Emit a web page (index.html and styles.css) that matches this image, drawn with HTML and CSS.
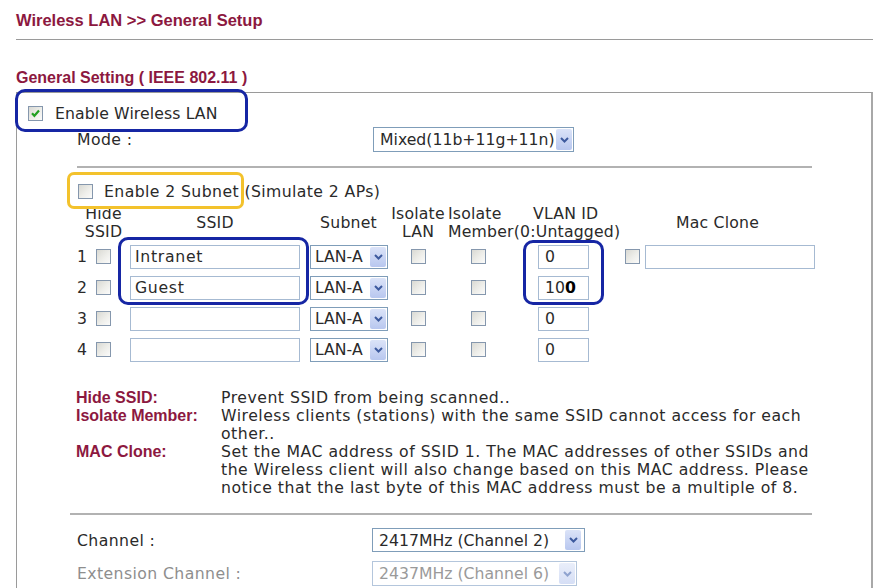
FILE: index.html
```html
<!DOCTYPE html>
<html>
<head>
<meta charset="utf-8">
<title>Wireless LAN General Setup</title>
<link rel="stylesheet" href="styles.css">
</head>
<body>
<div class="page">
  <h1 class="title">Wireless LAN &gt;&gt; General Setup</h1>
  <div class="rule"></div>
  <h2 class="section">General Setting ( IEEE 802.11 )</h2>
  <div class="box">
    <div class="enable-row">
      <span class="cb"><svg width="11" height="11" viewBox="0 0 11 11"><path d="M2 5.2 L4.4 7.8 L9 2.6" fill="none" stroke="#22a022" stroke-width="2.2"/></svg></span>
      <span>Enable Wireless LAN</span>
    </div>
    <div class="field-row mode-row">
      <span class="field-label">Mode :</span>
      <span class="select sel-mode"><span class="val">Mixed(11b+11g+11n)</span><span class="arrow"><svg width="9" height="6" viewBox="0 0 9 6"><path d="M1 1 L4.5 4.5 L8 1" fill="none" stroke="#3d5a9e" stroke-width="2"/></svg></span></span>
    </div>
    <div class="sep"></div>
    <div class="subnet-row">
      <span class="cb"></span>
      <span class="subnet-text">Enable 2 Subnet <span class="sim">(Simulate 2 APs)</span></span>
    </div>

    <div class="ssid-table">
      <div class="th th-hide">Hide<br>SSID</div>
      <div class="th th-center">SSID</div>
      <div class="th th-center th-subnet">Subnet</div>
      <div class="th th-iso">Isolate<br>LAN</div>
      <div class="th th-mem">Isolate<br>Member(0:Untagged)</div>
      <div class="th th-vlan">VLAN ID</div>
      <div class="th th-center th-mac">Mac Clone</div>

      <div class="td td-num">1</div>
      <div class="td td-hide"><span class="cb"></span></div>
      <div class="td"><span class="inp inp-ssid">Intranet</span></div>
      <div class="td td-subnet"><span class="select sel-subnet"><span class="val">LAN-A</span><span class="arrow"><svg width="9" height="6" viewBox="0 0 9 6"><path d="M1 1 L4.5 4.5 L8 1" fill="none" stroke="#3d5a9e" stroke-width="2"/></svg></span></span></div>
      <div class="td td-c"><span class="cb"></span></div>
      <div class="td td-c"><span class="cb"></span></div>
      <div class="td td-vlan"><span class="inp inp-vlan">0</span></div>
      <div class="td td-maccb"><span class="cb"></span></div>
      <div class="td"><span class="inp inp-mac"></span></div>

      <div class="td td-num">2</div>
      <div class="td td-hide"><span class="cb"></span></div>
      <div class="td"><span class="inp inp-ssid">Guest</span></div>
      <div class="td td-subnet"><span class="select sel-subnet"><span class="val">LAN-A</span><span class="arrow"><svg width="9" height="6" viewBox="0 0 9 6"><path d="M1 1 L4.5 4.5 L8 1" fill="none" stroke="#3d5a9e" stroke-width="2"/></svg></span></span></div>
      <div class="td td-c"><span class="cb"></span></div>
      <div class="td td-c"><span class="cb"></span></div>
      <div class="td td-vlan"><span class="inp inp-vlan">10<b>0</b></span></div>
      <div class="td"></div>
      <div class="td"></div>

      <div class="td td-num">3</div>
      <div class="td td-hide"><span class="cb"></span></div>
      <div class="td"><span class="inp inp-ssid"></span></div>
      <div class="td td-subnet"><span class="select sel-subnet"><span class="val">LAN-A</span><span class="arrow"><svg width="9" height="6" viewBox="0 0 9 6"><path d="M1 1 L4.5 4.5 L8 1" fill="none" stroke="#3d5a9e" stroke-width="2"/></svg></span></span></div>
      <div class="td td-c"><span class="cb"></span></div>
      <div class="td td-c"><span class="cb"></span></div>
      <div class="td td-vlan"><span class="inp inp-vlan">0</span></div>
      <div class="td"></div>
      <div class="td"></div>

      <div class="td td-num">4</div>
      <div class="td td-hide"><span class="cb"></span></div>
      <div class="td"><span class="inp inp-ssid"></span></div>
      <div class="td td-subnet"><span class="select sel-subnet"><span class="val">LAN-A</span><span class="arrow"><svg width="9" height="6" viewBox="0 0 9 6"><path d="M1 1 L4.5 4.5 L8 1" fill="none" stroke="#3d5a9e" stroke-width="2"/></svg></span></span></div>
      <div class="td td-c"><span class="cb"></span></div>
      <div class="td td-c"><span class="cb"></span></div>
      <div class="td td-vlan"><span class="inp inp-vlan">0</span></div>
      <div class="td"></div>
      <div class="td"></div>
    </div>

    <div class="notes">
      <div class="note-label">Hide SSID:</div>
      <div class="note-text">Prevent SSID from being scanned..</div>
      <div class="note-label">Isolate Member:</div>
      <div class="note-text">Wireless clients (stations) with the same SSID cannot access for each<br>other..</div>
      <div class="note-label">MAC Clone:</div>
      <div class="note-text">Set the MAC address of SSID 1. The MAC addresses of other SSIDs and<br>the Wireless client will also change based on this MAC address. Please<br>notice that the last byte of this MAC address must be a multiple of 8.</div>
    </div>

    <div class="sep sep2"></div>

    <div class="field-row channel-row">
      <span class="field-label">Channel :</span>
      <span class="select sel-channel"><span class="val">2417MHz (Channel 2)</span><span class="arrow"><svg width="9" height="6" viewBox="0 0 9 6"><path d="M1 1 L4.5 4.5 L8 1" fill="none" stroke="#3d5a9e" stroke-width="2"/></svg></span></span>
    </div>
    <div class="field-row ext-row">
      <span class="field-label">Extension Channel :</span>
      <span class="select sel-ext"><span class="val">2437MHz (Channel 6)</span><span class="arrow"><svg width="9" height="6" viewBox="0 0 9 6"><path d="M1 1 L4.5 4.5 L8 1" fill="none" stroke="#8fa3cf" stroke-width="2"/></svg></span></span>
    </div>
  </div>

  <div class="hl hl-enable"></div>
  <div class="hl hl-subnet"></div>
  <div class="hl hl-ssid"></div>
  <div class="hl hl-vlan"></div>
</div>
</body>
</html>
```

FILE: styles.css
```css
* { box-sizing: border-box; }
html, body { margin: 0; padding: 0; background: #fff; }
body {
  font-family: "DejaVu Sans", Verdana, sans-serif;
  font-size: 15.7px;
  letter-spacing: 0.4px;
  color: #2a2a2a;
}
.page {
  position: relative;
  width: 884px;
  height: 588px;
  overflow: hidden;
  padding-left: 16px;
  padding-right: 11px;
}
.title {
  margin: 0;
  padding-top: 10px;
  font: bold 16.5px/20px "Liberation Sans", Arial, sans-serif;
  letter-spacing: 0;
  color: #8c1840;
}
.rule { margin-top: 9px; height: 1px; background: #9a9a9a; }
.section {
  margin: 28px 0 0;
  font: bold 16px/20px "Liberation Sans", Arial, sans-serif;
  letter-spacing: 0;
  color: #8c1840;
}
.box {
  margin-top: 4px;
  border-top: 1px solid #9a9a9a;
  border-left: 1px solid #9a9a9a;
  border-right: 2px solid #a8a8a8;
  height: 600px;
}

/* checkbox */
.cb {
  width: 15px;
  height: 15px;
  flex: none;
  display: inline-flex;
  align-items: center;
  justify-content: center;
  border: 1px solid #8597ad;
  background: linear-gradient(135deg, #d9d9d3 0%, #eeeeea 55%, #fbfbfa 100%);
}

.enable-row {
  display: flex;
  align-items: center;
  gap: 12px;
  height: 26px;
  margin-top: 7px;
  padding-left: 11px;
  letter-spacing: 0.1px;
}

.field-row {
  display: flex;
  align-items: center;
  padding-left: 60px;
}
.field-label { width: 295px; flex: none; white-space: nowrap; }
.mode-row { height: 25px; margin-top: 1px; }

/* select look */
.select {
  display: flex;
  align-items: stretch;
  border: 1px solid #7f9db9;
  background: #fff;
  white-space: nowrap;
  letter-spacing: 0;
}
.select .val { flex: 1; display: flex; align-items: center; padding-left: 6px; }
.select .arrow {
  width: 16px;
  margin: 1px;
  flex: none;
  display: flex;
  align-items: center;
  justify-content: center;
  background: linear-gradient(#dbe3f8, #b8c7ef);
  border-radius: 2px;
}
.sel-mode { width: 201px; height: 25px; margin-left: 1px; }
.sel-subnet { width: 78px; height: 24px; }
.sel-subnet .val { padding-left: 4px; }
.sel-channel { width: 213px; height: 24px; }
.sel-channel .arrow { margin-right: 3px; }
.sel-ext { width: 205px; height: 25px; border-color: #b4c6dc; color: #9a9a9a; }
.sel-ext .arrow { background: linear-gradient(#e9eefa, #d5def5); }

.sep { height: 2px; background: #b2b2b2; margin: 14px 59px 0 60px; }
.sep2 { margin: 16px 59px 0 53px; }

.subnet-row {
  display: flex;
  align-items: center;
  gap: 11px;
  height: 22px;
  margin-top: 12px;
  padding-left: 61px;
  white-space: nowrap;
}

/* SSID table */
.ssid-table {
  margin-top: 3px;
  margin-left: 49px;
  display: grid;
  grid-template-columns: 28px 36px 170px 88px 60px 60px 112px 25px 170px;
}
.th { height: 36px; line-height: 18px; white-space: nowrap; letter-spacing: 0.2px; }
.th-hide { grid-column: span 2; text-align: center; padding-left: 11px; }
.th-center { display: flex; align-items: center; justify-content: center; }
.th-subnet { padding-left: 9px; }
.th-iso { text-align: center; }
.th-mem { text-align: left; position: relative; z-index: 1; }
.th-vlan { padding-left: 25px; }
.th-mac { grid-column: span 2; }

.td { height: 31px; display: flex; align-items: center; }
.td-num { padding-left: 11px; }
.td-hide { padding-left: 2px; }
.td-subnet { padding-left: 10px; }
.td-c { justify-content: center; }
.td-vlan { padding-left: 30px; }
.td-maccb { padding-left: 5px; }

.inp {
  display: flex;
  align-items: center;
  height: 24px;
  border: 1px solid #a6bad2;
  background: #fff;
  padding-left: 4px;
  white-space: nowrap;
  letter-spacing: 0;
}
.inp-ssid { width: 170px; letter-spacing: 0.7px; }
.inp-vlan { width: 51px; padding-left: 6px; }
.inp-vlan b { font-weight: bold; color: #000; }
.inp-mac { width: 170px; }

/* notes */
.notes {
  margin-top: 24px;
  padding-left: 59px;
  display: grid;
  grid-template-columns: 145px auto;
  line-height: 18px;
}
.note-label {
  font: bold 16px/18px "Liberation Sans", Arial, sans-serif;
  letter-spacing: 0;
  color: #8c1840;
  white-space: nowrap;
}
.note-text { white-space: nowrap; letter-spacing: 0.5px; }

.channel-row { height: 24px; margin-top: 13px; }
.ext-row { height: 25px; margin-top: 9px; color: #8e8e8e; }

/* annotation highlight boxes */
.hl {
  position: absolute;
  border: 3px solid #1626a4;
  border-radius: 10px;
  pointer-events: none;
}
.hl-enable { left: 15px; top: 89px; width: 233px; height: 43px; }
.hl-subnet { left: 67px; top: 172px; width: 177px; height: 37px; border-color: #f3c22c; border-radius: 7px; }
.hl-ssid { left: 118px; top: 237px; width: 191px; height: 68px; }
.hl-vlan { left: 523px; top: 240px; width: 81px; height: 65px; }
```
